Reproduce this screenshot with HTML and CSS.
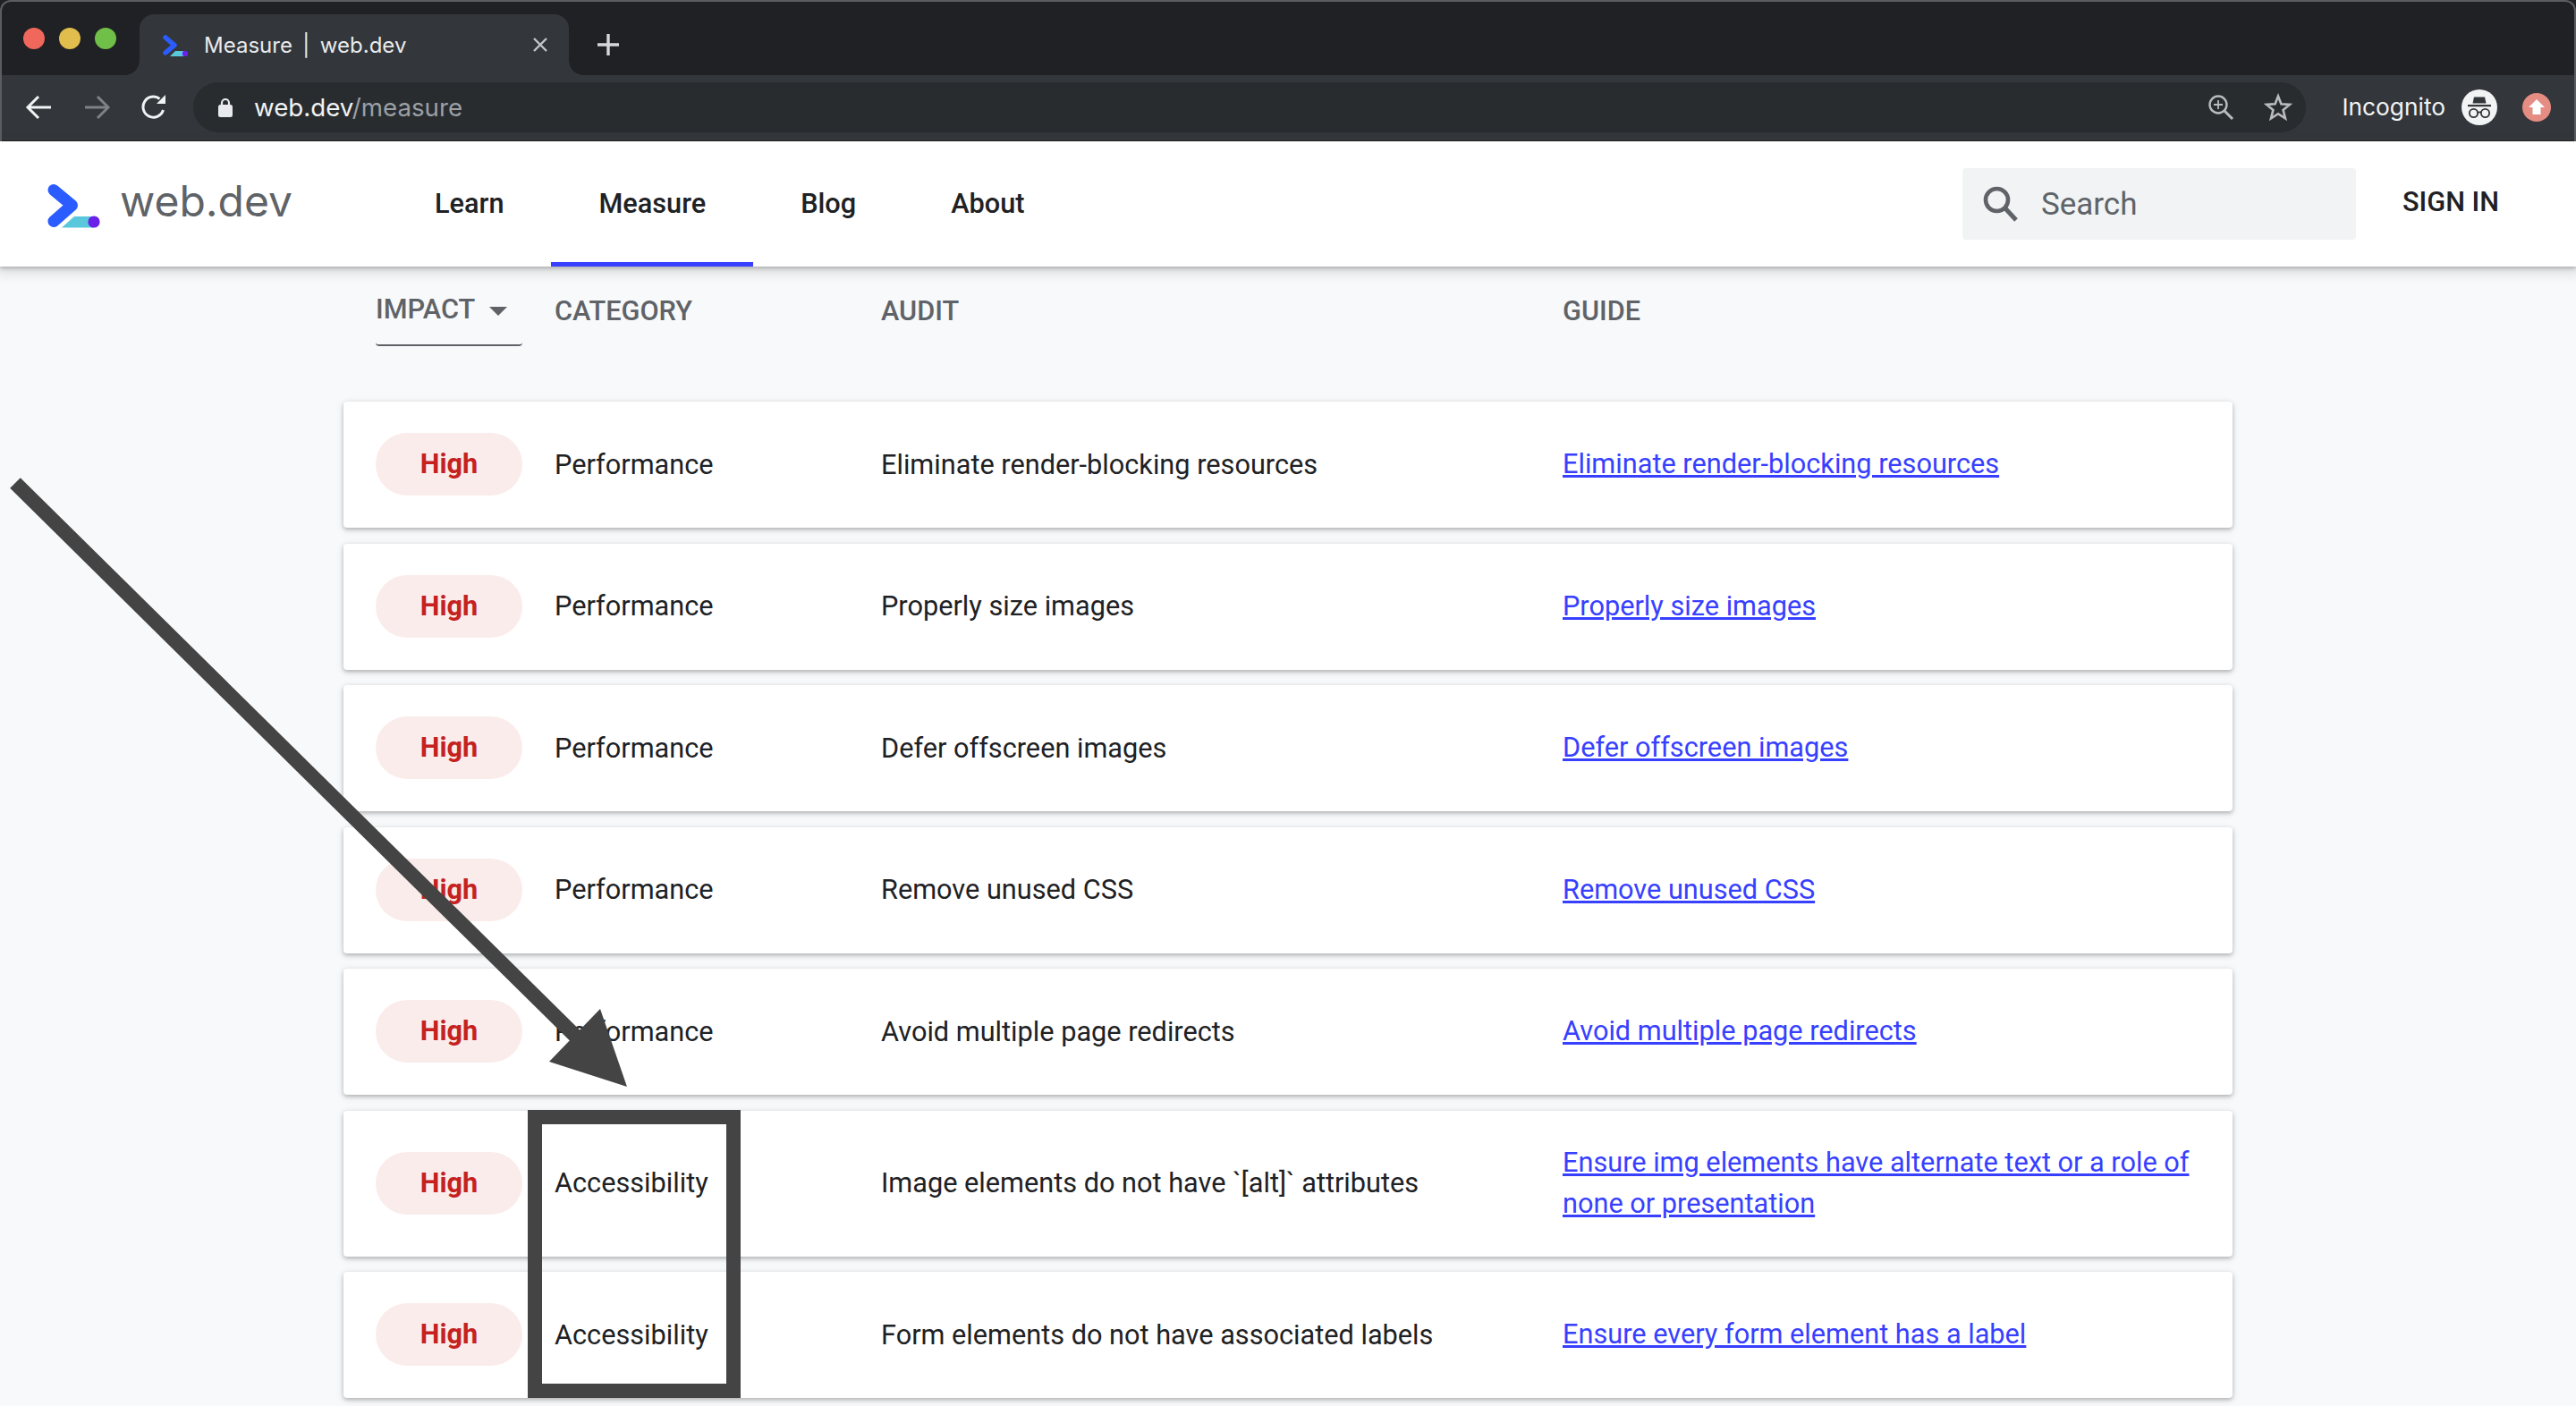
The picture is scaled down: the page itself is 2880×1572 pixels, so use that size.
FILE: index.html
```html
<!DOCTYPE html>
<html lang="en">
<head>
  <meta charset="UTF-8" />
  <title>Measure | web.dev</title>
  <link rel="stylesheet" href="styles.css">
</head>
<body>

  <div class="chrome">
    <div class="tabstrip">
      <div class="lights">
        <span class="light light-red"></span>
        <span class="light light-yellow"></span>
        <span class="light light-green"></span>
      </div>
      <div class="tab">
        <svg class="favicon" viewBox="0 0 28 24">
          <path d="M3 3 L13 11.5 L3 20" fill="none" stroke="#2a5cff" stroke-width="5.5" stroke-linecap="round" stroke-linejoin="round"/>
          <path d="M8 24 L14 18 H25 V24 Z" fill="#5ac8dc"/>
          <circle cx="25" cy="21" r="3.2" fill="#6b22e8"/>
        </svg>
        <span class="tab-title">Measure  |  web.dev</span>
        <svg class="tab-close" viewBox="0 0 16 16">
          <path d="M1 1 L15 15 M15 1 L1 15" stroke="#c4c6c9" stroke-width="2.4"/>
        </svg>
      </div>
      <svg class="new-tab" viewBox="0 0 24 24">
        <path d="M12 0 V24 M0 12 H24" stroke="#d5d7da" stroke-width="3.4"/>
      </svg>
    </div>

    <div class="toolbar">
      <svg class="tool" viewBox="0 0 32 32">
        <path d="M29 16 H5 M15 4 L3 16 L15 28" fill="none" stroke="#f1f3f4" stroke-width="3"/>
      </svg>
      <svg class="tool" viewBox="0 0 32 32">
        <path d="M3 16 H27 M17 4 L29 16 L17 28" fill="none" stroke="#7f8184" stroke-width="3"/>
      </svg>
      <svg class="tool" viewBox="0 0 32 32">
        <path d="M26.5 19 A11.5 11.5 0 1 1 22.5 6.5" fill="none" stroke="#f1f3f4" stroke-width="3"/>
        <path d="M19 12 L29 2 V12 Z" fill="#f1f3f4"/>
      </svg>

      <div class="omnibox">
        <svg class="lock" viewBox="0 0 16 22">
          <path d="M4 9 V6 A4 4 0 0 1 12 6 V9" fill="none" stroke="#e8eaed" stroke-width="2.2"/>
          <rect x="0" y="8" width="16" height="14" rx="2.5" fill="#e8eaed"/>
        </svg>
        <span class="url">web.dev<span class="url-path">/measure</span></span>
        <svg class="tool omni-zoom" viewBox="0 0 32 32">
          <circle cx="13" cy="13" r="9.5" fill="none" stroke="#b9bbbe" stroke-width="2.4"/>
          <path d="M13 8 V18 M8 13 H18" stroke="#b9bbbe" stroke-width="1.8"/>
          <path d="M20 20 L29 29" stroke="#b9bbbe" stroke-width="3"/>
        </svg>
        <svg class="tool" viewBox="0 0 32 32">
          <path d="M16 3.5 L19.4 12.3 L29 12.9 L21.6 19 L24 28.4 L16 23.2 L8 28.4 L10.4 19 L3 12.9 L12.6 12.3 Z" fill="none" stroke="#b9bbbe" stroke-width="2.6"/>
        </svg>
      </div>

      <span class="incognito-label">Incognito</span>
      <svg class="avatar" viewBox="0 0 40 40">
        <circle cx="20" cy="20" r="20" fill="#f1f3f4"/>
        <path d="M14 8.5 H26 L27.5 15.5 H12.5 Z" fill="#33363a"/>
        <rect x="7" y="17" width="26" height="2.2" fill="#33363a"/>
        <circle cx="13.5" cy="26.5" r="4.6" fill="none" stroke="#33363a" stroke-width="1.8"/>
        <circle cx="26.5" cy="26.5" r="4.6" fill="none" stroke="#33363a" stroke-width="1.8"/>
        <path d="M18 25.5 H22" stroke="#33363a" stroke-width="1.8"/>
      </svg>
      <svg class="update" viewBox="0 0 32 32">
        <circle cx="16" cy="16" r="16" fill="#e58c83"/>
        <path d="M16 7 L25 16 H20.5 V24 H11.5 V16 H7 Z" fill="#fff"/>
      </svg>
    </div>
  </div>

  <header class="site-header">
    <a class="brand">
      <svg class="brand-mark" viewBox="0 0 60 50">
        <path d="M7 7.5 L27.5 24.5 L7 42.5" fill="none" stroke="#2a5cff" stroke-width="13" stroke-linecap="round" stroke-linejoin="round"/>
        <path d="M16 49.5 L30 37 H52 V49.5 Z" fill="#5ac8dc"/>
        <circle cx="52" cy="43" r="6.6" fill="#6b22e8"/>
      </svg>
      <span class="brand-name">web.dev</span>
    </a>
    <nav class="site-nav">
      <a>Learn</a>
      <a class="active">Measure</a>
      <a>Blog</a>
      <a>About</a>
    </nav>
    <div class="search">
      <svg class="search-icon" viewBox="0 0 40 40">
        <circle cx="15.5" cy="15.5" r="12.5" fill="none" stroke="#5f6368" stroke-width="4.6"/>
        <path d="M24.5 24.5 L37 38" stroke="#5f6368" stroke-width="5"/>
      </svg>
      <span>Search</span>
    </div>
    <a class="sign-in">SIGN IN</a>
  </header>

  <main class="audits">
    <div class="audits-head">
      <div class="impact-select">IMPACT <span class="caret"></span></div>
      <div class="head-cell">CATEGORY</div>
      <div class="head-cell">AUDIT</div>
      <div class="head-cell">GUIDE</div>
    </div>

    <div class="audit-row">
      <span class="pill">High</span>
      <span>Performance</span>
      <span>Eliminate render-blocking resources</span>
      <a class="guide">Eliminate render-blocking resources</a>
    </div>
    <div class="audit-row">
      <span class="pill">High</span>
      <span>Performance</span>
      <span>Properly size images</span>
      <a class="guide">Properly size images</a>
    </div>
    <div class="audit-row">
      <span class="pill">High</span>
      <span>Performance</span>
      <span>Defer offscreen images</span>
      <a class="guide">Defer offscreen images</a>
    </div>
    <div class="audit-row">
      <span class="pill">High</span>
      <span>Performance</span>
      <span>Remove unused CSS</span>
      <a class="guide">Remove unused CSS</a>
    </div>
    <div class="audit-row">
      <span class="pill">High</span>
      <span>Performance</span>
      <span>Avoid multiple page redirects</span>
      <a class="guide">Avoid multiple page redirects</a>
    </div>
    <div class="audit-row">
      <span class="pill">High</span>
      <span>Accessibility</span>
      <span>Image elements do not have `[alt]` attributes</span>
      <a class="guide">Ensure img elements have alternate text or a role of none or presentation</a>
    </div>
    <div class="audit-row">
      <span class="pill">High</span>
      <span>Accessibility</span>
      <span>Form elements do not have associated labels</span>
      <a class="guide">Ensure every form element has a label</a>
    </div>
  </main>

  <!-- drawn on top of the screenshot -->
  <svg class="annotation" viewBox="0 0 2880 1572">
    <path d="M17 540 L645 1160" stroke="#444" stroke-width="16.5"/>
    <path d="M671 1128 L701 1215 L614 1187 Z" fill="#444"/>
    <rect x="598" y="1249" width="222" height="306" fill="none" stroke="#444" stroke-width="16"/>
  </svg>

</body>
</html>
```

FILE: styles.css
```css
:root {
  --strip: #202124;
  --bar: #33363a;
  --omni: #292c2f;
  --ink: #202124;
  --grey: #5f6368;
  --blue: #3740ff;
}

* {
  box-sizing: border-box;
}

body {
  margin: 0;
  position: relative;
  width: 2880px;
  height: 1572px;
  overflow: hidden;
  background-color: #f8f9fa;
  color: var(--ink);
  font-family: Roboto, sans-serif;
  font-size: 30.7px;
}

/* browser window */
.chrome {
  position: relative;
  height: 158px;
  font-family: Inter, sans-serif;
}

.chrome::after {
  content: "";
  position: absolute;
  inset: 0;
  border: 2px solid #5c5d60;
  border-bottom: none;
  border-radius: 12px 12px 0 0;
  pointer-events: none;
}

.tabstrip {
  display: flex;
  align-items: flex-start;
  height: 84px;
  padding: 16px 0 0 26px;
  background-color: var(--strip);
}

.lights {
  display: flex;
  gap: 16px;
  margin-top: 15px;
}

.light {
  width: 24px;
  height: 24px;
  border-radius: 50%;
}

.light-red { background-color: #f0675c; }
.light-yellow { background-color: #e0bd4c; }
.light-green { background-color: #6fbf48; }

.tab {
  position: relative;
  display: flex;
  align-items: center;
  width: 480px;
  height: 68px;
  margin-left: 26px;
  padding: 0 24px 0 26px;
  background-color: var(--bar);
  border-radius: 16px 16px 0 0;
}

.tab::before,
.tab::after {
  content: "";
  position: absolute;
  bottom: 0;
  width: 16px;
  height: 16px;
}

.tab::before {
  left: -16px;
  background: radial-gradient(circle at 0 0, var(--strip) 15.5px, var(--bar) 16px);
}

.tab::after {
  right: -16px;
  background: radial-gradient(circle at 100% 0, var(--strip) 15.5px, var(--bar) 16px);
}

.favicon {
  width: 28px;
  height: 24px;
  margin-top: 2px;
}

.tab-title {
  margin-left: 18px;
  color: #e8eaed;
  font-size: 24px;
  white-space: pre;
  word-spacing: -1px;
}

.tab-close {
  width: 16px;
  height: 16px;
  margin-left: auto;
}

.new-tab {
  width: 24px;
  height: 24px;
  margin: 22px 0 0 32px;
}

.toolbar {
  display: flex;
  align-items: center;
  height: 74px;
  padding: 0 28px 2px 28px;
  background-color: var(--bar);
  border-bottom: 1px solid #1d1e20;
}

.tool {
  width: 32px;
  height: 32px;
  flex-shrink: 0;
}

.toolbar > .tool + .tool {
  margin-left: 32px;
}

.omnibox {
  display: flex;
  align-items: center;
  flex: 1;
  height: 56px;
  margin: 0 40px 0 28px;
  padding: 0 15px 0 28px;
  background-color: var(--omni);
  border-radius: 28px;
}

.lock {
  width: 16px;
  height: 22px;
  margin-right: 24px;
}

.url {
  color: #f1f3f4;
  font-size: 27.7px;
}

.url-path {
  color: #9aa0a6;
}

.omni-zoom {
  margin-left: auto;
  margin-right: 32px;
}

.incognito-label {
  color: #f1f3f4;
  font-size: 26.3px;
}

.avatar {
  width: 40px;
  height: 40px;
  margin-left: 18px;
}

.update {
  width: 32px;
  height: 32px;
  margin-left: 28px;
}

/* site header */
.site-header {
  position: relative;
  display: flex;
  align-items: center;
  height: 140px;
  padding-right: 86px;
  background-color: #fff;
  box-shadow: 0 2px 4px rgba(60, 64, 67, 0.3), 0 4px 12px 4px rgba(60, 64, 67, 0.15);
}

.brand {
  display: flex;
  align-items: center;
  width: 433px;
  padding-left: 53px;
}

.brand-mark {
  width: 60px;
  height: 50px;
  margin-top: 4px;
}

.brand-name {
  margin: -8px 0 0 21px;
  color: var(--grey);
  font-family: Inter, sans-serif;
  font-size: 48px;
}

.site-nav {
  display: flex;
  align-self: stretch;
}

.site-nav a {
  display: flex;
  align-items: center;
  padding: 4px 53px 0;
  border-bottom: 5px solid transparent;
  font-weight: 500;
}

.site-nav a.active {
  border-bottom-color: var(--blue);
}

.search {
  display: flex;
  align-items: center;
  gap: 25px;
  width: 440px;
  height: 80px;
  margin-left: auto;
  padding-left: 23px;
  background-color: #f1f3f4;
  border-radius: 4px;
  color: var(--grey);
  font-size: 35px;
}

.search-icon {
  width: 40px;
  height: 40px;
}

.sign-in {
  margin: -6px 0 0 52px;
  font-weight: 500;
}

/* audit table */
.audits {
  padding: 0 384px;
}

.audits-head,
.audit-row {
  display: grid;
  grid-template-columns: 164px 329px 726px 1fr;
  column-gap: 36px;
  padding: 0 36px;
}

.audits-head {
  align-items: start;
  height: 151px;
  padding-top: 30px;
  color: var(--grey);
  font-weight: 500;
  line-height: 36px;
}

.head-cell {
  padding-top: 2px;
}

.impact-select {
  padding-bottom: 21px;
  border-bottom: 2px solid var(--grey);
  border-radius: 0 0 4px 4px;
}

.caret {
  display: inline-block;
  margin: 0 0 3px 9px;
  border-top: 10px solid var(--grey);
  border-left: 10px solid transparent;
  border-right: 10px solid transparent;
}

.audit-row {
  align-items: center;
  margin-bottom: 17.5px;
  padding-top: 35px;
  padding-bottom: 36px;
  background-color: #fff;
  border-radius: 4px;
  box-shadow: 0 2px 4px rgba(60, 64, 67, 0.3), 0 2px 8px rgba(60, 64, 67, 0.15);
}

.pill {
  height: 70px;
  background-color: #faeceb;
  border-radius: 35px;
  color: #c5221f;
  font-weight: 700;
  line-height: 70px;
  text-align: center;
}

.guide {
  color: var(--blue);
  line-height: 46px;
  text-decoration: underline;
}

/* arrow and box over the page */
.annotation {
  position: absolute;
  top: 0;
  left: 0;
  width: 2880px;
  height: 1572px;
}
```
